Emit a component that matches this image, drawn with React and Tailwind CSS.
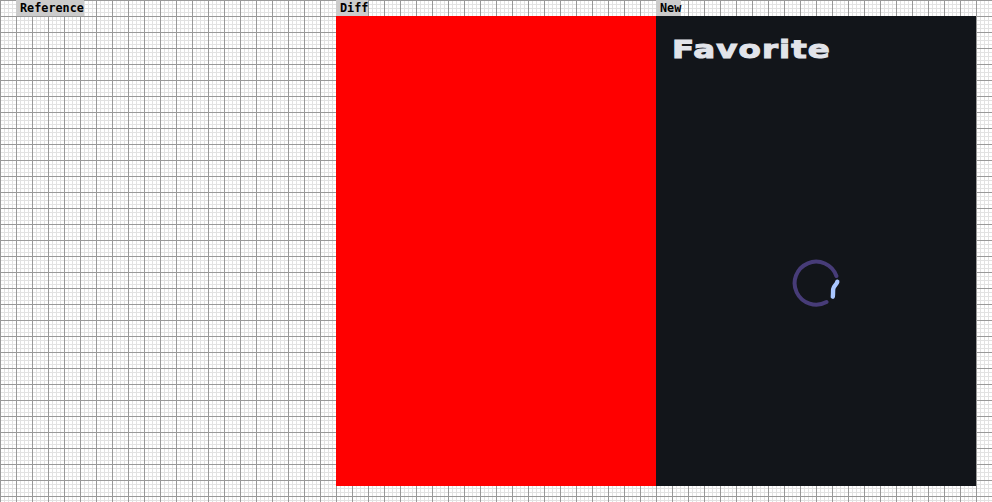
const App = () => {
    return (
        <div className="min-h-[502px] w-[992px] overflow-hidden bg-white bg-[linear-gradient(#999_1px,transparent_1px),linear-gradient(90deg,#999_1px,transparent_1px),linear-gradient(#e2e2e2_1px,transparent_1px),linear-gradient(90deg,#e2e2e2_1px,transparent_1px)] bg-[size:16px_16px,16px_16px,4px_4px,4px_4px] pl-4">
            <div className="flex">
                {/* Reference */}
                <div className="w-[320px]">
                    <div className="h-4 w-fit bg-[#ccc] pl-1 font-['DejaVu_Sans_Mono',monospace] text-[11.8px] leading-4 font-bold text-black">Reference</div>
                    <div className="h-[470px]"></div>
                </div>

                {/* Diff */}
                <div className="w-[320px]">
                    <div className="h-4 w-fit bg-[#ccc] pl-1 font-['DejaVu_Sans_Mono',monospace] text-[11.8px] leading-4 font-bold text-black">Diff</div>
                    <div className="h-[470px] bg-[#ff0000]"></div>
                </div>

                {/* New */}
                <div className="w-[320px]">
                    <div className="h-4 w-fit bg-[#ccc] pl-1 font-['DejaVu_Sans_Mono',monospace] text-[11.8px] leading-4 font-bold text-black">New</div>
                    <div className="flex h-[470px] flex-col bg-[#12151a]">
                        <div className="h-16 px-4 pt-4 font-['DejaVu_Sans',sans-serif] text-[25px] leading-9 font-bold tracking-[0.8px] text-[#e2e4ea] [-webkit-text-stroke:1px_#e2e4ea]">
                            <div className="origin-left scale-x-[1.3]">Favorite</div>
                        </div>
                        <div className="flex flex-1 items-center justify-center">
                            <svg width="48" height="48" viewBox="0 0 48 48" fill="none" strokeWidth="4" strokeLinecap="round">
                                <path d="M44.4 17A21.5 21.5 0 1 0 34.5 43" stroke="#473c78" />
                                <path d="M45.3 22.7C44.5 26 41.8 26.5 41.2 30C40.9 33 41.2 35.5 40.8 37.7" stroke="#a9c6ff" strokeWidth="4.4" />
                            </svg>
                        </div>
                    </div>
                </div>
            </div>
        </div>
    );
};

export default App;
